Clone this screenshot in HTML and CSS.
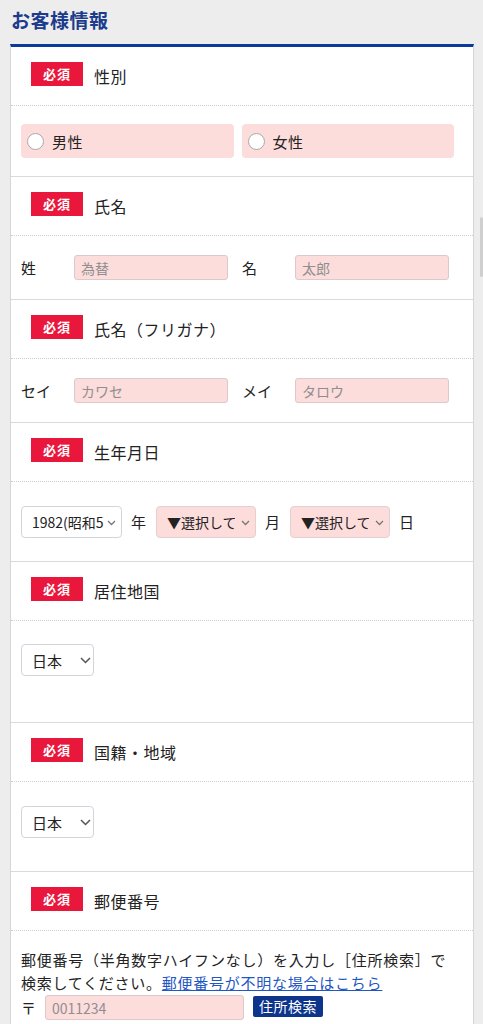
FILE: index.html
```html
<!DOCTYPE html>
<html lang="ja">
<head>
<meta charset="utf-8">
<title>お客様情報</title>
<link rel="stylesheet" href="styles.css">
</head>
<body>
<h1 class="page-title">お客様情報</h1>
<div class="card">
  <div class="q-head"><span class="badge">必須</span><span class="q-label">性別</span></div>
  <div class="q-body radios">
    <label class="radio-box"><input type="radio" name="sex"><span>男性</span></label>
    <label class="radio-box"><input type="radio" name="sex"><span>女性</span></label>
  </div>

  <div class="q-head"><span class="badge">必須</span><span class="q-label">氏名</span></div>
  <div class="q-body name-row">
    <span class="field-label">姓</span><input class="text-input" type="text" placeholder="為替">
    <span class="field-label second">名</span><input class="text-input" type="text" placeholder="太郎">
  </div>

  <div class="q-head"><span class="badge">必須</span><span class="q-label">氏名（フリガナ）</span></div>
  <div class="q-body name-row">
    <span class="field-label">セイ</span><input class="text-input" type="text" placeholder="カワセ">
    <span class="field-label second">メイ</span><input class="text-input" type="text" placeholder="タロウ">
  </div>

  <div class="q-head"><span class="badge">必須</span><span class="q-label">生年月日</span></div>
  <div class="q-body date-row">
    <span class="select-wrap">
      <select class="select sel-year"><option>1982(昭和57年)</option></select>
      <svg class="chev" width="9" height="6" viewBox="0 0 9 6"><path d="M1 1l3.5 3.5L8 1" fill="none" stroke="#777" stroke-width="1.3"/></svg>
    </span>
    <span class="unit">年</span>
    <span class="select-wrap">
      <select class="select sel-pink sel-md"><option>▼選択して</option></select>
      <svg class="chev" width="9" height="6" viewBox="0 0 9 6"><path d="M1 1l3.5 3.5L8 1" fill="none" stroke="#777" stroke-width="1.3"/></svg>
    </span>
    <span class="unit">月</span>
    <span class="select-wrap">
      <select class="select sel-pink sel-md"><option>▼選択して</option></select>
      <svg class="chev" width="9" height="6" viewBox="0 0 9 6"><path d="M1 1l3.5 3.5L8 1" fill="none" stroke="#777" stroke-width="1.3"/></svg>
    </span>
    <span class="unit">日</span>
  </div>

  <div class="q-head"><span class="badge">必須</span><span class="q-label">居住地国</span></div>
  <div class="q-body country-row">
    <span class="select-wrap">
      <select class="select sel-country"><option>日本</option></select>
      <svg class="chev chev-lg" width="11" height="7" viewBox="0 0 11 7"><path d="M1 1l4.5 4.5L10 1" fill="none" stroke="#555" stroke-width="1.5"/></svg>
    </span>
  </div>

  <div class="q-head"><span class="badge">必須</span><span class="q-label">国籍・地域</span></div>
  <div class="q-body nation-row">
    <span class="select-wrap">
      <select class="select sel-country"><option>日本</option></select>
      <svg class="chev chev-lg" width="11" height="7" viewBox="0 0 11 7"><path d="M1 1l4.5 4.5L10 1" fill="none" stroke="#555" stroke-width="1.5"/></svg>
    </span>
  </div>

  <div class="q-head"><span class="badge">必須</span><span class="q-label">郵便番号</span></div>
  <div class="q-body postal-body">
    <p class="note">郵便番号（半角数字ハイフンなし）を入力し［住所検索］で<br>検索してください。<a class="link" href="#">郵便番号が不明な場合はこちら</a></p>
    <div class="postal-row">
      <span class="postal-mark">〒</span>
      <input class="text-input postal-input" type="text" placeholder="0011234">
      <button class="search-btn" type="button">住所検索</button>
    </div>
  </div>
</div>
<div class="scroll-thumb"></div>
</body>
</html>
```
FILE: styles.css
```css
* { box-sizing: border-box; }
html, body { margin: 0; padding: 0; }
body {
  background: #ededed;
  font-family: "Noto Sans CJK JP", "Noto Sans", sans-serif;
  color: #222;
  overflow: hidden;
}
.page-title {
  margin: 0;
  padding: 6px 11px 10px;
  font-size: 19px;
  line-height: 28px;
  font-weight: 700;
  color: #1c3b8c;
  letter-spacing: 0.5px;
}
.card {
  margin-left: 10px;
  width: 464px;
  background: #fff;
  border-top: 3px solid #0b3a9b;
  border-left: 1px solid #d6d6d6;
  border-right: 1px solid #d6d6d6;
}
.q-head {
  display: flex;
  align-items: flex-start;
  gap: 11px;
  height: 59px;
  padding: 15px 20px 0;
  border-bottom: 1px dotted #cfcfcf;
}
.badge {
  width: 52px;
  height: 24px;
  background: #e8173b;
  color: #fff;
  font-size: 13px;
  font-weight: 700;
  line-height: 24px;
  text-align: center;
  letter-spacing: 1px;
}
.q-label {
  font-size: 16px;
  line-height: 28px;
  letter-spacing: 0.5px;
  color: #222;
}
.q-body {
  border-bottom: 1px solid #dadada;
}
.radios {
  display: grid;
  grid-template-columns: 1fr 1fr;
  gap: 8px;
  padding: 18px 19px 18px 10px;
}
.radio-box {
  display: flex;
  align-items: center;
  gap: 8px;
  height: 34px;
  padding-left: 6px;
  background: #fddcdc;
  border-radius: 4px;
  font-size: 15px;
  letter-spacing: 0.5px;
}
.radio-box input {
  appearance: none;
  -webkit-appearance: none;
  margin: 0;
  width: 17px;
  height: 17px;
  border: 1px solid #a9a9a9;
  border-radius: 50%;
  background: #fff;
}
.name-row {
  display: flex;
  align-items: center;
  padding: 19px 10px;
}
.field-label {
  width: 53px;
  font-size: 15px;
  line-height: 25px;
}
.field-label.second {
  margin-left: 14px;
}
.text-input {
  width: 154px;
  height: 25px;
  margin: 0;
  padding: 0 6px;
  background: #fddcdc;
  border: 1px solid #dccaca;
  border-radius: 3px;
  font-family: inherit;
  font-size: 14px;
  color: #333;
}
.text-input::placeholder {
  color: #8f8f8f;
}
.date-row {
  display: flex;
  align-items: center;
  gap: 10px;
  padding: 24px 10px 23px;
}
.unit {
  font-size: 15px;
  line-height: 20px;
  margin-left: -1px;
}
.select-wrap {
  position: relative;
  display: inline-block;
  height: 32px;
}
.select {
  appearance: none;
  -webkit-appearance: none;
  margin: 0;
  height: 32px;
  padding: 0 17px 0 10px;
  background: #fff;
  border: 1px solid #d3d3dc;
  border-radius: 4px;
  font-family: inherit;
  font-size: 14px;
  color: #222;
}
.sel-year { width: 101px; }
.sel-md { width: 100px; padding-right: 20px; }
.sel-pink {
  background: #fddcdc;
  border-color: #e5cfcf;
}
.sel-country { width: 73px; font-size: 15px; }
.chev {
  position: absolute;
  right: 6px;
  top: 14px;
  pointer-events: none;
}
.chev.chev-lg {
  right: 3px;
  top: 13px;
}
.country-row {
  padding: 23px 10px 46px;
}
.nation-row {
  padding: 24px 10px 33px;
}
.postal-body {
  padding: 17px 10px 20px;
  border-bottom: none;
}
.note {
  margin: 0;
  font-size: 15px;
  line-height: 23px;
  letter-spacing: 0.05em;
  color: #222;
}
.link {
  color: #1f57c3;
  text-decoration: underline;
}
.postal-row {
  display: flex;
  align-items: flex-start;
  margin-top: 1px;
}
.postal-mark {
  width: 24px;
  font-size: 15px;
  line-height: 25px;
}
.postal-input {
  width: 199px;
}
.search-btn {
  margin: 1px 0 0 9px;
  height: 21px;
  padding: 0 6px;
  background: #0d358c;
  color: #fff;
  border: none;
  border-radius: 2px;
  font-family: inherit;
  font-size: 14px;
  line-height: 21px;
  letter-spacing: 0.5px;
}
.scroll-thumb {
  position: fixed;
  right: 0;
  top: 217px;
  width: 3px;
  height: 60px;
  background: #cfcfcf;
  border-radius: 2px;
}
```
